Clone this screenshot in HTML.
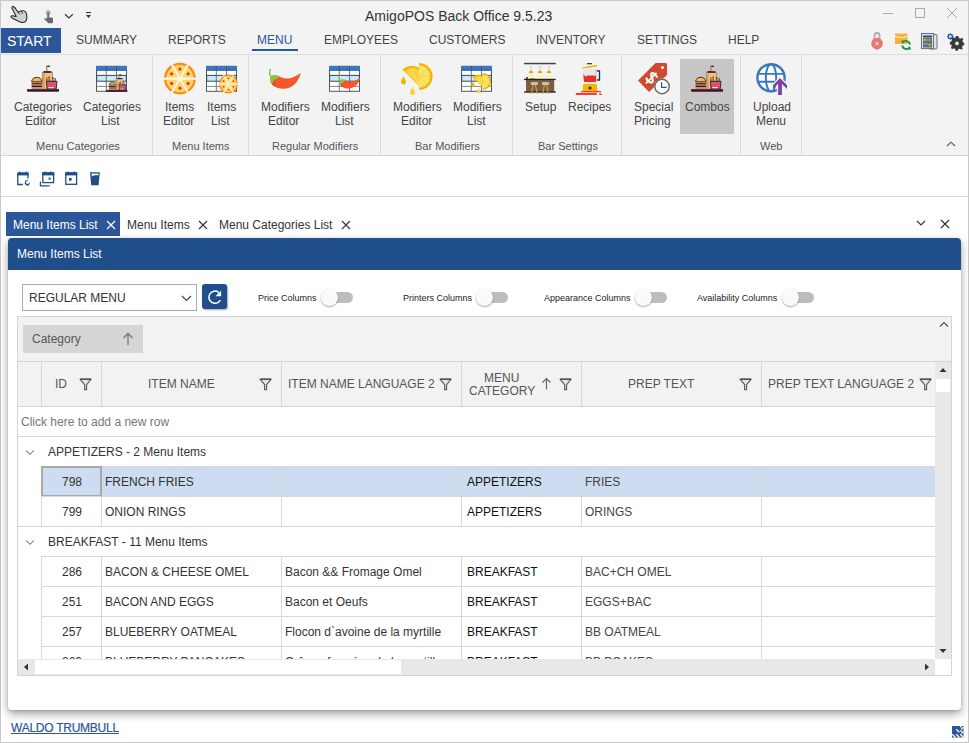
<!DOCTYPE html>
<html><head><meta charset="utf-8">
<style>
*{box-sizing:border-box;margin:0;padding:0}
html,body{width:969px;height:743px;overflow:hidden;background:#fff;font-family:"Liberation Sans",sans-serif;color:#333}
.a{position:absolute}
.t{position:absolute;white-space:nowrap;line-height:1}
#win{position:absolute;left:0;top:0;width:969px;height:743px;border:1px solid #c9c9c9;border-width:1px 1px 1px 1px;background:#fff;overflow:hidden}
</style></head><body>
<div id="win"></div>
<!-- title bar + tabs + ribbon background -->
<div class="a" style="left:1px;top:1px;width:967px;height:154px;background:#f3f3f3"></div>
<div class="a" style="left:1px;top:54px;width:967px;height:1px;background:#dcdcdc"></div>
<div class="a" style="left:1px;top:155px;width:967px;height:1px;background:#d6d6d6"></div>
<div class="t" style="left:365px;top:9px;font-size:14px;color:#333">AmigoPOS Back Office 9.5.23</div>

<!-- window controls -->
<div class="a" style="left:883px;top:13px;width:10px;height:1px;background:#a8a8a8"></div>
<div class="a" style="left:915px;top:8px;width:10px;height:10px;border:1px solid #a8a8a8"></div>
<svg class="a" style="left:946px;top:7px" width="12" height="12"><path d="M1 1L11 11M11 1L1 11" stroke="#a8a8a8" stroke-width="1"/></svg>

<!-- ribbon tabs -->
<div class="a" style="left:1px;top:28px;width:60px;height:25px;background:#2b579a"></div>
<div class="t" style="left:7px;top:34px;font-size:14px;color:#fff">START</div>
<div class="t" style="left:76px;top:34px;font-size:12px;color:#444">SUMMARY</div>
<div class="t" style="left:168px;top:34px;font-size:12px;color:#444">REPORTS</div>
<div class="t" style="left:257px;top:34px;font-size:12px;color:#2b579a">MENU</div>
<div class="a" style="left:252px;top:49px;width:46px;height:2px;background:#2b579a"></div>
<div class="t" style="left:324px;top:34px;font-size:12px;color:#444">EMPLOYEES</div>
<div class="t" style="left:429px;top:34px;font-size:12px;color:#444">CUSTOMERS</div>
<div class="t" style="left:536px;top:34px;font-size:12px;color:#444">INVENTORY</div>
<div class="t" style="left:637px;top:34px;font-size:12px;color:#444">SETTINGS</div>
<div class="t" style="left:728px;top:34px;font-size:12px;color:#444">HELP</div>

<!-- ribbon groups separators -->
<div class="a" style="left:152px;top:55px;width:1px;height:100px;background:#dadada"></div>
<div class="a" style="left:248px;top:55px;width:1px;height:100px;background:#dadada"></div>
<div class="a" style="left:380px;top:55px;width:1px;height:100px;background:#dadada"></div>
<div class="a" style="left:512px;top:55px;width:1px;height:100px;background:#dadada"></div>
<div class="a" style="left:621px;top:55px;width:1px;height:100px;background:#dadada"></div>
<div class="a" style="left:740px;top:55px;width:1px;height:100px;background:#dadada"></div>
<div class="a" style="left:801px;top:55px;width:1px;height:100px;background:#dadada"></div>

<!-- combos highlight -->
<div class="a" style="left:680px;top:59px;width:54px;height:75px;background:#c9c7c5"></div>

<svg class="a" style="left:24px;top:60px" width="40" height="36" viewBox="0 0 40 36"><g transform="translate(0,0) scale(1.0)"><path d="M22.5 6.3H26" stroke="#231f20" stroke-width="1.2"/><path d="M22.8 6V11.5" stroke="#888" stroke-width="1.2"/><path d="M18.3 12.2H28.4L27.8 29H18.9Z" fill="#f8c27a" stroke="#8a8a8a" stroke-width="0.9"/><rect x="19.5" y="11" width="7.8" height="2" fill="#5a2a40"/><rect x="19.3" y="13.3" width="1.4" height="15.5" fill="#d99a4a"/><path d="M23 17.5V22M25 16.5V22M29 17V22M31 18V22" stroke="#231f20" stroke-width="1.1"/><path d="M24 17.5V22M30 17.5V22" stroke="#f5c350" stroke-width="1"/><path d="M22.3 21.3H33L32.2 29H23.2Z" fill="#d9526f" stroke="#231f20" stroke-width="0.9"/><rect x="24.3" y="27.2" width="5.5" height="1" fill="#fff"/><path d="M7.6 21.5A5.3 5.2 0 0 1 18 21.5Z" fill="#f8b54c" stroke="#231f20" stroke-width="0.9"/><rect x="7.6" y="21.5" width="10.4" height="1.8" fill="#b6854a"/><rect x="7.6" y="23.2" width="10.4" height="1.3" fill="#231f20"/><rect x="7.6" y="24.5" width="10.4" height="1.5" fill="#c0557a"/><rect x="7.6" y="26" width="10.4" height="1.1" fill="#231f20"/><rect x="7.6" y="27.1" width="10.4" height="2" fill="#c89a48"/><rect x="3.2" y="29" width="31.7" height="2.7" fill="#2a1620"/><rect x="3.2" y="29" width="31.7" height="1" fill="#6a2a48"/></g></svg>
<svg class="a" style="left:92px;top:60px" width="40" height="36" viewBox="0 0 40 36"><rect x="4.5" y="6.3" width="30" height="25" fill="#fff" stroke="#555" stroke-width="1"/><rect x="4" y="6" width="31" height="4.6" fill="#3b78bf"/><path d="M4 10.3H35" stroke="#2a5a90" stroke-width="0.8"/><rect x="4.7" y="15.4" width="29.6" height="5.8" fill="#cfe9fb" stroke="#2d4b5e" stroke-width="1"/><path d="M14.3 6V31.5M24.5 6V31.5" stroke="#666" stroke-width="0.9"/><path d="M14.3 6V10.3M24.5 6V10.3" stroke="#2a5a90" stroke-width="0.9"/><path d="M4.5 26.4H34.5" stroke="#777" stroke-width="0.9"/><g transform="translate(11.9,10.5) scale(0.67)"><path d="M22.5 6.3H26" stroke="#231f20" stroke-width="1.2"/><path d="M22.8 6V11.5" stroke="#888" stroke-width="1.2"/><path d="M18.3 12.2H28.4L27.8 29H18.9Z" fill="#f8c27a" stroke="#8a8a8a" stroke-width="0.9"/><rect x="19.5" y="11" width="7.8" height="2" fill="#5a2a40"/><rect x="19.3" y="13.3" width="1.4" height="15.5" fill="#d99a4a"/><path d="M23 17.5V22M25 16.5V22M29 17V22M31 18V22" stroke="#231f20" stroke-width="1.1"/><path d="M24 17.5V22M30 17.5V22" stroke="#f5c350" stroke-width="1"/><path d="M22.3 21.3H33L32.2 29H23.2Z" fill="#d9526f" stroke="#231f20" stroke-width="0.9"/><rect x="24.3" y="27.2" width="5.5" height="1" fill="#fff"/><path d="M7.6 21.5A5.3 5.2 0 0 1 18 21.5Z" fill="#f8b54c" stroke="#231f20" stroke-width="0.9"/><rect x="7.6" y="21.5" width="10.4" height="1.8" fill="#b6854a"/><rect x="7.6" y="23.2" width="10.4" height="1.3" fill="#231f20"/><rect x="7.6" y="24.5" width="10.4" height="1.5" fill="#c0557a"/><rect x="7.6" y="26" width="10.4" height="1.1" fill="#231f20"/><rect x="7.6" y="27.1" width="10.4" height="2" fill="#c89a48"/><rect x="3.2" y="29" width="31.7" height="2.7" fill="#2a1620"/><rect x="3.2" y="29" width="31.7" height="1" fill="#6a2a48"/></g></svg>
<svg class="a" style="left:160px;top:60px" width="40" height="38" viewBox="0 0 40 38"><circle cx="19.9" cy="18.6" r="15.9" fill="#ff8a1c"/><circle cx="19.9" cy="18.6" r="13.674" fill="#ffd95c"/><path d="M3.00 18.60L36.80 18.60" stroke="#f4f4f4" stroke-width="2.07"/><path d="M11.45 3.96L28.35 33.24" stroke="#f4f4f4" stroke-width="2.07"/><path d="M28.35 3.96L11.45 33.24" stroke="#f4f4f4" stroke-width="2.07"/><circle cx="28.16" cy="23.37" r="1.59" fill="#e8303a"/><circle cx="19.90" cy="28.14" r="1.59" fill="#e8303a"/><circle cx="11.64" cy="23.37" r="1.59" fill="#e8303a"/><circle cx="11.64" cy="13.83" r="1.59" fill="#e8303a"/><circle cx="19.90" cy="9.06" r="1.59" fill="#e8303a"/><circle cx="28.16" cy="13.83" r="1.59" fill="#e8303a"/></svg>
<svg class="a" style="left:202px;top:60px" width="40" height="38" viewBox="0 0 40 38"><rect x="4.5" y="6.3" width="30" height="25" fill="#fff" stroke="#555" stroke-width="1"/><rect x="4" y="6" width="31" height="4.6" fill="#3b78bf"/><path d="M4 10.3H35" stroke="#2a5a90" stroke-width="0.8"/><rect x="4.7" y="15.4" width="29.6" height="5.8" fill="#cfe9fb" stroke="#2d4b5e" stroke-width="1"/><path d="M14.3 6V31.5M24.5 6V31.5" stroke="#666" stroke-width="0.9"/><path d="M14.3 6V10.3M24.5 6V10.3" stroke="#2a5a90" stroke-width="0.9"/><path d="M4.5 26.4H34.5" stroke="#777" stroke-width="0.9"/><circle cx="26.5" cy="24" r="9.4" fill="#ff8a1c"/><circle cx="26.5" cy="24" r="8.084" fill="#ffd95c"/><path d="M16.10 24.00L36.90 24.00" stroke="#f4f4f4" stroke-width="1.22"/><path d="M21.30 14.99L31.70 33.01" stroke="#f4f4f4" stroke-width="1.22"/><path d="M31.70 14.99L21.30 33.01" stroke="#f4f4f4" stroke-width="1.22"/><circle cx="31.38" cy="26.82" r="0.94" fill="#e8303a"/><circle cx="26.50" cy="29.64" r="0.94" fill="#e8303a"/><circle cx="21.62" cy="26.82" r="0.94" fill="#e8303a"/><circle cx="21.62" cy="21.18" r="0.94" fill="#e8303a"/><circle cx="26.50" cy="18.36" r="0.94" fill="#e8303a"/><circle cx="31.38" cy="21.18" r="0.94" fill="#e8303a"/></svg>
<svg class="a" style="left:265px;top:60px" width="40" height="36" viewBox="0 0 40 36"><g transform="translate(0,0) scale(1)"><path d="M5.5 9.5C4.5 11 4.3 13.5 5.8 16.5" stroke="#8bc34a" stroke-width="1.5" fill="none" stroke-linecap="round"/><path d="M7 24.5C10 27.5 14 28.8 18.5 28.8C26.5 28.8 33 23 35.8 13C31 16.5 26 18.8 21 18.6C18 18.4 16 17 14.5 16.5C10.5 18.5 8 21 7 24.5Z" fill="#f6562a"/><path d="M5 18C5 15.5 8 15 10.5 15C13 15 14.5 16.3 14.5 16.8C11 18 8.5 21 6.7 24.5C5.3 23 5 20.5 5 18Z" fill="#8bc34a"/><path d="M10 19.5C8 21.5 7 23 7 24.5C8.5 25.5 9.5 26 10.5 26.3C10.5 24 10.5 21.5 10 19.5Z" fill="#e04a24"/></g></svg>
<svg class="a" style="left:325px;top:60px" width="40" height="36" viewBox="0 0 40 36"><rect x="4.5" y="6.3" width="30" height="25" fill="#fff" stroke="#555" stroke-width="1"/><rect x="4" y="6" width="31" height="4.6" fill="#3b78bf"/><path d="M4 10.3H35" stroke="#2a5a90" stroke-width="0.8"/><rect x="4.7" y="15.4" width="29.6" height="5.8" fill="#cfe9fb" stroke="#2d4b5e" stroke-width="1"/><path d="M14.3 6V31.5M24.5 6V31.5" stroke="#666" stroke-width="0.9"/><path d="M14.3 6V10.3M24.5 6V10.3" stroke="#2a5a90" stroke-width="0.9"/><path d="M4.5 26.4H34.5" stroke="#777" stroke-width="0.9"/><g transform="translate(11,9) scale(0.68)"><path d="M5.5 9.5C4.5 11 4.3 13.5 5.8 16.5" stroke="#8bc34a" stroke-width="1.5" fill="none" stroke-linecap="round"/><path d="M7 24.5C10 27.5 14 28.8 18.5 28.8C26.5 28.8 33 23 35.8 13C31 16.5 26 18.8 21 18.6C18 18.4 16 17 14.5 16.5C10.5 18.5 8 21 7 24.5Z" fill="#f6562a"/><path d="M5 18C5 15.5 8 15 10.5 15C13 15 14.5 16.3 14.5 16.8C11 18 8.5 21 6.7 24.5C5.3 23 5 20.5 5 18Z" fill="#8bc34a"/><path d="M10 19.5C8 21.5 7 23 7 24.5C8.5 25.5 9.5 26 10.5 26.3C10.5 24 10.5 21.5 10 19.5Z" fill="#e04a24"/></g></svg>
<svg class="a" style="left:397px;top:58px" width="40" height="40" viewBox="0 0 40 40"><g transform="translate(0,0) scale(1)"><path d="M22.1 28L5.5 11.5A15.5 15.5 0 0 1 22.1 9.5Z" fill="#f2b705"/><path d="M22.1 27L8 13A13 13 0 0 1 22.1 11.5Z" fill="#f8d23a"/><path d="M22.1 27L14.5 10.5M22.1 27L22.1 11.5M22.1 27L11 12" stroke="#fbe27a" stroke-width="0.8"/><path d="M22.1 5A13.5 13.5 0 0 1 22.1 32Z" fill="#f2b705"/><path d="M22.1 7.6A10.9 10.9 0 0 1 22.1 29.4Z" fill="#f9e46a"/><path d="M22.1 18.5L30 10.5M22.1 18.5H33M22.1 18.5L30 26.5" stroke="#f5d040" stroke-width="0.8"/><path d="M6.5 18.3C5.2 21 4 22.5 4 24C4 25.5 5.1 26.4 6.5 26.4C7.9 26.4 9 25.5 9 24C9 22.5 7.8 21 6.5 18.3Z" fill="#f2b705"/><path d="M15.5 29C14.2 31.7 13 33.2 13 34.7C13 36.2 14.1 37.1 15.5 37.1C16.9 37.1 18 36.2 18 34.7C18 33.2 16.8 31.7 15.5 29Z" fill="#f8d23a"/></g></svg>
<svg class="a" style="left:457px;top:60px" width="40" height="38" viewBox="0 0 40 38"><rect x="4.5" y="6.3" width="30" height="25" fill="#fff" stroke="#555" stroke-width="1"/><rect x="4" y="6" width="31" height="4.6" fill="#3b78bf"/><path d="M4 10.3H35" stroke="#2a5a90" stroke-width="0.8"/><rect x="4.7" y="15.4" width="29.6" height="5.8" fill="#cfe9fb" stroke="#2d4b5e" stroke-width="1"/><path d="M14.3 6V31.5M24.5 6V31.5" stroke="#666" stroke-width="0.9"/><path d="M14.3 6V10.3M24.5 6V10.3" stroke="#2a5a90" stroke-width="0.9"/><path d="M4.5 26.4H34.5" stroke="#777" stroke-width="0.9"/><g transform="translate(12,10) scale(0.62)"><path d="M22.1 28L5.5 11.5A15.5 15.5 0 0 1 22.1 9.5Z" fill="#f2b705"/><path d="M22.1 27L8 13A13 13 0 0 1 22.1 11.5Z" fill="#f8d23a"/><path d="M22.1 27L14.5 10.5M22.1 27L22.1 11.5M22.1 27L11 12" stroke="#fbe27a" stroke-width="0.8"/><path d="M22.1 5A13.5 13.5 0 0 1 22.1 32Z" fill="#f2b705"/><path d="M22.1 7.6A10.9 10.9 0 0 1 22.1 29.4Z" fill="#f9e46a"/><path d="M22.1 18.5L30 10.5M22.1 18.5H33M22.1 18.5L30 26.5" stroke="#f5d040" stroke-width="0.8"/><path d="M6.5 18.3C5.2 21 4 22.5 4 24C4 25.5 5.1 26.4 6.5 26.4C7.9 26.4 9 25.5 9 24C9 22.5 7.8 21 6.5 18.3Z" fill="#f2b705"/><path d="M15.5 29C14.2 31.7 13 33.2 13 34.7C13 36.2 14.1 37.1 15.5 37.1C16.9 37.1 18 36.2 18 34.7C18 33.2 16.8 31.7 15.5 29Z" fill="#f8d23a"/></g></svg>
<svg class="a" style="left:520px;top:58px" width="40" height="40" viewBox="0 0 40 40"><rect x="4" y="4.8" width="31.8" height="1.5" fill="#4a4038"/><rect x="10.3" y="6.2" width="1.4" height="6" fill="#d8d8d8"/><path d="M8.8 15A2.2 2.6 0 0 1 13.2 15Z" fill="#e0a020"/><path d="M9.2 15H12.8L14.2 20.8H7.8Z" fill="#fbf3c4"/><rect x="19.2" y="6.2" width="1.4" height="6" fill="#d8d8d8"/><path d="M17.7 15A2.2 2.6 0 0 1 22.099999999999998 15Z" fill="#e0a020"/><path d="M18.099999999999998 15H21.7L23.099999999999998 20.8H16.7Z" fill="#fbf3c4"/><rect x="28.3" y="6.2" width="1.4" height="6" fill="#d8d8d8"/><path d="M26.8 15A2.2 2.6 0 0 1 31.2 15Z" fill="#e0a020"/><path d="M27.2 15H30.8L32.2 20.8H25.8Z" fill="#fbf3c4"/><rect x="6" y="19" width="2" height="2.3" fill="#c0302a"/><rect x="10" y="20" width="5" height="1.6" fill="#d8a040"/><rect x="6" y="22" width="28.2" height="12" fill="#7a5f45"/><rect x="4" y="20.8" width="31.8" height="1.3" fill="#222"/><rect x="4" y="33.4" width="31.8" height="1.3" fill="#222"/><path d="M13.3 26.5L11.3 36M15.3 26.5L17.3 36" stroke="#e0a030" stroke-width="1.1"/><rect x="10.8" y="24" width="7.2" height="3" rx="1" fill="#cbc1aa"/><path d="M24.5 26.5L22.5 36M26.5 26.5L28.5 36" stroke="#e0a030" stroke-width="1.1"/><rect x="22" y="24" width="7.2" height="3" rx="1" fill="#cbc1aa"/></svg>
<svg class="a" style="left:570px;top:58px" width="40" height="40" viewBox="0 0 40 40"><rect x="17" y="5" width="5" height="1.3" fill="#2e4a62"/><path d="M12.5 9.2L27 6.8V8.6L12.5 10.6Z" fill="#f0b400"/><path d="M26.5 13H29.5V22H26.5" stroke="#1e3345" stroke-width="1.3" fill="none"/><rect x="13" y="11" width="13.5" height="13" fill="#e8e8e8"/><rect x="25.3" y="11" width="1.3" height="13" fill="#c8c8c8"/><path d="M13.3 16C15 17.5 16 20 16.5 18C18 17.5 22 17.3 26 18V24H14Z" fill="#e8302a"/><path d="M13.3 26H26.7L27.5 33H12.5Z" fill="#f5b800"/><circle cx="20" cy="30" r="1.6" fill="#1e3345"/><rect x="11" y="33" width="20" height="1.3" fill="#ff3a2a"/><rect x="5.8" y="35" width="21" height="2" fill="#ff3a2a"/><rect x="29" y="35.5" width="3" height="1.5" rx="0.7" fill="#ff3a2a"/></svg>
<svg class="a" style="left:634px;top:58px" width="40" height="40" viewBox="0 0 40 40"><path d="M4 22.5L21.5 5H32L33 6V17L15 34Z" fill="#d04a2e"/><circle cx="28.5" cy="9.5" r="1.5" fill="#fff"/><g transform="rotate(45 17.8 20)"><path d="M21.3 16.3C20.3 14.6 14.8 14.6 14.4 17C14 19.6 21.3 19.4 21 22.6C20.7 25.3 14.8 25.3 13.8 23.3" stroke="#fff" fill="none" stroke-width="2.1"/><path d="M17.5 13V28" stroke="#fff" stroke-width="1.7"/></g><circle cx="28" cy="28.5" r="7.6" fill="#fff" stroke="#f3f3f3" stroke-width="1"/><circle cx="28" cy="28.5" r="7.2" fill="#fff" stroke="#666" stroke-width="1.4"/><path d="M27.6 24.2V29.3H32.6" stroke="#1a5bb0" stroke-width="1.2" fill="none"/></svg>
<svg class="a" style="left:688px;top:60px" width="40" height="36" viewBox="0 0 40 36"><g transform="translate(0,0) scale(1.0)"><path d="M22.5 6.3H26" stroke="#231f20" stroke-width="1.2"/><path d="M22.8 6V11.5" stroke="#888" stroke-width="1.2"/><path d="M18.3 12.2H28.4L27.8 29H18.9Z" fill="#f8c27a" stroke="#8a8a8a" stroke-width="0.9"/><rect x="19.5" y="11" width="7.8" height="2" fill="#5a2a40"/><rect x="19.3" y="13.3" width="1.4" height="15.5" fill="#d99a4a"/><path d="M23 17.5V22M25 16.5V22M29 17V22M31 18V22" stroke="#231f20" stroke-width="1.1"/><path d="M24 17.5V22M30 17.5V22" stroke="#f5c350" stroke-width="1"/><path d="M22.3 21.3H33L32.2 29H23.2Z" fill="#d9526f" stroke="#231f20" stroke-width="0.9"/><rect x="24.3" y="27.2" width="5.5" height="1" fill="#fff"/><path d="M7.6 21.5A5.3 5.2 0 0 1 18 21.5Z" fill="#f8b54c" stroke="#231f20" stroke-width="0.9"/><rect x="7.6" y="21.5" width="10.4" height="1.8" fill="#b6854a"/><rect x="7.6" y="23.2" width="10.4" height="1.3" fill="#231f20"/><rect x="7.6" y="24.5" width="10.4" height="1.5" fill="#c0557a"/><rect x="7.6" y="26" width="10.4" height="1.1" fill="#231f20"/><rect x="7.6" y="27.1" width="10.4" height="2" fill="#c89a48"/><rect x="3.2" y="29" width="31.7" height="2.7" fill="#2a1620"/><rect x="3.2" y="29" width="31.7" height="1" fill="#6a2a48"/></g></svg>
<svg class="a" style="left:752px;top:58px" width="40" height="40" viewBox="0 0 40 40"><circle cx="19" cy="19.8" r="13.6" fill="#fff" stroke="#3a77bf" stroke-width="2.4"/><ellipse cx="19" cy="19.8" rx="5.2" ry="13.6" fill="none" stroke="#3a77bf" stroke-width="2"/><path d="M6 15.9H32M6 23.7H32" stroke="#3a77bf" stroke-width="1.9"/><path d="M28 18.3L36.8 27.3V32.5L31.2 26.8V38.5H24.8V26.8L19.2 32.5V27.3Z" fill="#f3f3f3"/><path d="M28 20L35 27.3V31L29.9 25.8V37H26.1V25.8L21 31V27.3Z" fill="#8040a8"/></svg>
<svg class="a" style="left:5px;top:3px" width="30" height="24" viewBox="0 0 30 24"><path d="M7.2 5.8C6.2 4.3 7.3 3.2 8.6 3.6C9.6 3.9 10.4 5.2 11.6 7.1L13.2 9.2C14.6 8.4 16.2 7.6 18 7.8C20 8 21.3 9.4 21.6 11.5C22 14 21.8 16.5 21.3 17.5C20.6 19 18.6 19.8 16.5 19.4C14.8 19.1 12 17.5 9.5 16.3C7.5 15.4 6 14.6 6 13.5C6 12.6 7.4 12.5 9 13L11.2 13.7C9.8 11 8.3 7.6 7.2 5.8Z" fill="#d0d0d0" stroke="#2a2a2a" stroke-width="1.1" stroke-linejoin="round"/><path d="M13.2 9.2L14.8 11.5M16.3 8.2L17.6 10.8" stroke="#2a2a2a" stroke-width="0.9"/></svg>
<svg class="a" style="left:38px;top:3px" width="60" height="24" viewBox="0 0 60 24"><circle cx="10.2" cy="9.6" r="2.6" fill="#9cc3e8"/><rect x="9.3" y="9.3" width="1.9" height="9" rx="0.9" fill="#6a6a6a"/><path d="M8.8 14.5H13.6C14.6 14.5 15 15.3 15 16.2V19.8L14 20.2H10.5L6.3 16.2L6.7 15.2L9 15.6Z" fill="#6a6a6a"/><path d="M27 11.2L30.9 15L34.8 11.2" stroke="#333" stroke-width="1.2" fill="none"/><rect x="48" y="9" width="5" height="1.1" fill="#333"/><path d="M48 11.9H53L50.5 14.9Z" fill="#333"/></svg>
<svg class="a" style="left:10px;top:165px" width="100" height="30" viewBox="0 0 100 30"><path d="M7.8 8.2H18V13.5M7.8 8.2V19.5H13" stroke="#1f4e8a" stroke-width="1.3" fill="none"/><rect x="7.2" y="7.6" width="11.3" height="2.8" fill="#1f4e8a"/><path d="M9.8 6.5V8.5M16.2 6.5V8.5" stroke="#1f4e8a" stroke-width="1.3"/><path d="M19.4 17.8A2.1 2.1 0 1 1 17.8 15.6M16.2 18.4A2.1 2.1 0 0 0 18.6 20.3" stroke="#1f4e8a" stroke-width="1.1" fill="none"/><path d="M30.4 16.4V20.8H39.6" stroke="#1f4e8a" stroke-width="1.2" fill="none"/><rect x="32.8" y="8" width="10.8" height="9.6" fill="none" stroke="#1f4e8a" stroke-width="1.3"/><rect x="32.2" y="7.4" width="12" height="3" fill="#1f4e8a"/><path d="M35 6.5V8.5M41 6.5V8.5" stroke="#1f4e8a" stroke-width="1.3"/><rect x="38.6" y="12.6" width="2" height="2" fill="#1f4e8a"/><rect x="55.8" y="8" width="10.8" height="11.3" fill="none" stroke="#1f4e8a" stroke-width="1.3"/><rect x="55.2" y="7.4" width="12" height="3" fill="#1f4e8a"/><path d="M58 6.5V8.5M64 6.5V8.5" stroke="#1f4e8a" stroke-width="1.3"/><rect x="59" y="13" width="2.6" height="2.6" fill="#1f4e8a"/><path d="M80 7.2H89.8L88.6 20.3H81.2Z" fill="#1f4e8a"/><path d="M81.3 8.5H88.5L88.3 10.5C86 10 83.5 10.5 82 11.5Z" fill="#e6eef8"/></svg>
<svg class="a" style="left:868px;top:30px" width="100" height="22" viewBox="0 0 100 22"><path d="M6.5 10V5.5A2.5 2.5 0 0 1 11.5 5.5V10" stroke="#b0b0b0" stroke-width="1.8" fill="none"/><circle cx="9" cy="13.5" r="5.8" fill="#e9776c"/><rect x="7.5" y="18" width="3" height="1.5" fill="#e9776c"/><path d="M7.4 11.9L10.6 15.1M10.6 11.9L7.4 15.1" stroke="#fff" stroke-width="0.9"/><path d="M27 3.5H39.5V14H27Z" fill="#fbb03b"/><path d="M27 6C31 8 35 8 39.5 6" stroke="#fff" stroke-width="0.9" fill="none"/><path d="M42 14.5A4.3 4.3 0 0 0 34.5 12.5" stroke="#21974a" stroke-width="2" fill="none"/><path d="M34.2 15.5A4.3 4.3 0 0 0 41.7 17.5" stroke="#21974a" stroke-width="2" fill="none"/><path d="M33 10.5L36.2 10.8L34.4 14Z" fill="#21974a"/><path d="M43.3 19.5L40 19.2L41.8 16Z" fill="#21974a"/><rect x="61" y="4.5" width="8" height="14.5" rx="1" fill="#dfe6ec" stroke="#6a7580" stroke-width="1"/><rect x="53.5" y="3.5" width="12" height="15" fill="#dfe6ec" stroke="#6a7580" stroke-width="1.1"/><rect x="55" y="5.5" width="9" height="2" fill="#34495e"/><rect x="55" y="8" width="9" height="9.5" fill="#5d6d7e"/><rect x="55.5" y="8.8" width="2.3" height="2.3" fill="#f5a623"/><path d="M58.5 10H63" stroke="#c8d0d8" stroke-width="0.8"/><rect x="60.5" y="13.5" width="2.3" height="2.3" fill="#f5a623"/><path d="M55.5 14H59.5" stroke="#c8d0d8" stroke-width="0.8"/><g transform="translate(82.3,6.5)"><path d="M0 -3.6L1 -2.4L2.5 -2.6L2.4 -1L3.6 0L2.4 1L2.5 2.6L1 2.4L0 3.6L-1 2.4L-2.5 2.6L-2.4 1L-3.6 0L-2.4 -1L-2.5 -2.6L-1 -2.4Z" fill="#1565c0"/><circle r="1.3" fill="#f3f3f3"/></g><g transform="translate(89,13.4)"><path d="M-1.2 -6H1.2L1.6 -4.2L3.2 -3.4L4.8 -4.4L6.2 -3L5.2 -1.4L5.8 0.2L7 0.8V3L5.6 3.4L4.8 5L5.6 6.4L4 7.6L2.6 6.6L1 7.2L0.6 8.6H-1.6L-2 7L-3.6 6.2L-5 7.2L-6.4 5.6L-5.4 4.2L-6 2.6L-7.4 2.2V0L-6 -0.6L-5.2 -2.2L-6 -3.8L-4.4 -5L-3 -4L-1.6 -4.6Z" fill="#3a3a3a" transform="translate(0.2,-1.3)"/><circle r="1.8" fill="#f3f3f3"/></g></svg>
<svg class="a" style="left:952px;top:726px" width="12" height="12" viewBox="0 0 12 12"><rect x="0" y="0" width="11.5" height="11.5" fill="#2b579a"/><rect x="8" y="0" width="1.5" height="1.5" fill="#f4efe4"/><rect x="10" y="1" width="1.5" height="1.5" fill="#f4efe4"/><rect x="9" y="2" width="1.5" height="1.5" fill="#f4efe4"/><rect x="4" y="3" width="1.5" height="1.5" fill="#f4efe4"/><rect x="5" y="4" width="1.5" height="1.5" fill="#f4efe4"/><rect x="6" y="5" width="1.5" height="1.5" fill="#f4efe4"/><rect x="8" y="4" width="1.5" height="1.5" fill="#f4efe4"/><rect x="10" y="5" width="1.5" height="1.5" fill="#f4efe4"/><rect x="9" y="6" width="1.5" height="1.5" fill="#f4efe4"/><rect x="0" y="8" width="1.5" height="1.5" fill="#f4efe4"/><rect x="1" y="9" width="1.5" height="1.5" fill="#f4efe4"/><rect x="2" y="10" width="1.5" height="1.5" fill="#f4efe4"/><rect x="4" y="8" width="1.5" height="1.5" fill="#f4efe4"/><rect x="5" y="9" width="1.5" height="1.5" fill="#f4efe4"/><rect x="6" y="10" width="1.5" height="1.5" fill="#f4efe4"/><rect x="8" y="8" width="1.5" height="1.5" fill="#f4efe4"/><rect x="9" y="9" width="1.5" height="1.5" fill="#f4efe4"/><rect x="10" y="10" width="1.5" height="1.5" fill="#f4efe4"/></svg>
<!-- ribbon labels -->
<div class="t" style="left:14px;top:101px;font-size:12px;color:#444">Categories</div>
<div class="t" style="left:25px;top:115px;font-size:12px;color:#444">Editor</div>
<div class="t" style="left:83px;top:101px;font-size:12px;color:#444">Categories</div>
<div class="t" style="left:101px;top:115px;font-size:12px;color:#444">List</div>
<div class="t" style="left:165px;top:101px;font-size:12px;color:#444">Items</div>
<div class="t" style="left:163px;top:115px;font-size:12px;color:#444">Editor</div>
<div class="t" style="left:207px;top:101px;font-size:12px;color:#444">Items</div>
<div class="t" style="left:211px;top:115px;font-size:12px;color:#444">List</div>
<div class="t" style="left:261px;top:101px;font-size:12px;color:#444">Modifiers</div>
<div class="t" style="left:268px;top:115px;font-size:12px;color:#444">Editor</div>
<div class="t" style="left:321px;top:101px;font-size:12px;color:#444">Modifiers</div>
<div class="t" style="left:335px;top:115px;font-size:12px;color:#444">List</div>
<div class="t" style="left:393px;top:101px;font-size:12px;color:#444">Modifiers</div>
<div class="t" style="left:401px;top:115px;font-size:12px;color:#444">Editor</div>
<div class="t" style="left:453px;top:101px;font-size:12px;color:#444">Modifiers</div>
<div class="t" style="left:467px;top:115px;font-size:12px;color:#444">List</div>
<div class="t" style="left:525px;top:101px;font-size:12px;color:#444">Setup</div>
<div class="t" style="left:568px;top:101px;font-size:12px;color:#444">Recipes</div>
<div class="t" style="left:634px;top:101px;font-size:12px;color:#444">Special</div>
<div class="t" style="left:634px;top:115px;font-size:12px;color:#444">Pricing</div>
<div class="t" style="left:685px;top:101px;font-size:12px;color:#444">Combos</div>
<div class="t" style="left:753px;top:101px;font-size:12px;color:#444">Upload</div>
<div class="t" style="left:756px;top:115px;font-size:12px;color:#444">Menu</div>

<div class="t" style="left:36px;top:141px;font-size:11px;color:#555">Menu Categories</div>
<div class="t" style="left:172px;top:141px;font-size:11px;color:#555">Menu Items</div>
<div class="t" style="left:272px;top:141px;font-size:11px;color:#555">Regular Modifiers</div>
<div class="t" style="left:415px;top:141px;font-size:11px;color:#555">Bar Modifiers</div>
<div class="t" style="left:538px;top:141px;font-size:11px;color:#555">Bar Settings</div>
<div class="t" style="left:760px;top:141px;font-size:11px;color:#555">Web</div>
<svg class="a" style="left:946px;top:141px" width="10" height="7"><path d="M1 5L5 1.2L9 5" stroke="#5a5a5a" fill="none" stroke-width="1.05"/></svg>

<!-- toolbar line -->
<div class="a" style="left:1px;top:196px;width:967px;height:1px;background:#d8d8d8"></div>

<!-- doc tabs -->
<div class="a" style="left:6px;top:212px;width:114px;height:24px;background:#2b579a"></div>
<div class="t" style="left:13px;top:219px;font-size:12px;color:#fff">Menu Items List</div>
<svg class="a" style="left:106px;top:220px" width="10" height="10"><path d="M1 1L9 9M9 1L1 9" stroke="#fff" stroke-width="1.2"/></svg>
<div class="t" style="left:127px;top:219px;font-size:12px;color:#333">Menu Items</div>
<svg class="a" style="left:198px;top:220px" width="10" height="10"><path d="M1 1L9 9M9 1L1 9" stroke="#333" stroke-width="1.1"/></svg>
<div class="t" style="left:219px;top:219px;font-size:12px;color:#333">Menu Categories List</div>
<svg class="a" style="left:341px;top:220px" width="10" height="10"><path d="M1 1L9 9M9 1L1 9" stroke="#333" stroke-width="1.1"/></svg>
<svg class="a" style="left:916px;top:220px" width="10" height="7"><path d="M1 1L5 5L9 1" stroke="#333" fill="none" stroke-width="1.2"/></svg>
<svg class="a" style="left:940px;top:219px" width="10" height="10"><path d="M1 1L9 9M9 1L1 9" stroke="#333" stroke-width="1.2"/></svg>

<!-- panel -->
<div class="a" style="left:8px;top:238px;width:953px;height:472px;background:#fff;border-radius:4px;box-shadow:0 4px 10px rgba(0,0,0,0.36),0 1px 3px rgba(0,0,0,0.12)"></div>
<div class="a" style="left:8px;top:238px;width:953px;height:32px;background:#1f4e8a;border-radius:4px 4px 0 0"></div>
<div class="t" style="left:17px;top:248px;font-size:12px;color:#fff">Menu Items List</div>


<!-- combo + toggles -->
<div class="a" style="left:22px;top:284px;width:175px;height:27px;border:1px solid #a9a9a9;background:#fff"></div>
<div class="t" style="left:29px;top:292px;font-size:12px;color:#333">REGULAR MENU</div>
<svg class="a" style="left:181px;top:295px" width="11" height="7"><path d="M1 1L5.5 5.5L10 1" stroke="#444" fill="none" stroke-width="1.2"/></svg>
<div class="a" style="left:202px;top:284px;width:25px;height:25px;background:#1f4e8a;border-radius:3px;box-shadow:1px 1px 2px rgba(0,0,0,0.35)"></div>
<svg class="a" style="left:202px;top:284px" width="25" height="25"><path d="M16.6 8.3A6.1 6.1 0 1 0 18.3 16.2" stroke="#fff" fill="none" stroke-width="1.5"/><path d="M19.1 6.6V12.3H13.4Z" fill="#fff"/></svg>
<div class="t" style="left:258px;top:294px;font-size:9px;color:#222">Price Columns</div>
<div class="a" style="left:322px;top:292px;width:31px;height:11px;border-radius:6px;background:#bdbdbd"></div>
<div class="a" style="left:321px;top:289px;width:17px;height:17px;border-radius:50%;background:#fafafa;box-shadow:0 1px 2px rgba(0,0,0,0.35)"></div>
<div class="t" style="left:403px;top:294px;font-size:9px;color:#222">Printers Columns</div>
<div class="a" style="left:477px;top:292px;width:31px;height:11px;border-radius:6px;background:#bdbdbd"></div>
<div class="a" style="left:476px;top:289px;width:17px;height:17px;border-radius:50%;background:#fafafa;box-shadow:0 1px 2px rgba(0,0,0,0.35)"></div>
<div class="t" style="left:544px;top:294px;font-size:9px;color:#222">Appearance Columns</div>
<div class="a" style="left:636px;top:292px;width:31px;height:11px;border-radius:6px;background:#bdbdbd"></div>
<div class="a" style="left:635px;top:289px;width:17px;height:17px;border-radius:50%;background:#fafafa;box-shadow:0 1px 2px rgba(0,0,0,0.35)"></div>
<div class="t" style="left:697px;top:294px;font-size:9px;color:#222">Availability Columns</div>
<div class="a" style="left:783px;top:292px;width:31px;height:11px;border-radius:6px;background:#bdbdbd"></div>
<div class="a" style="left:782px;top:289px;width:17px;height:17px;border-radius:50%;background:#fafafa;box-shadow:0 1px 2px rgba(0,0,0,0.35)"></div>
<div class="a" style="left:17px;top:316px;width:935px;height:360px;border:1px solid #d4d4d4;background:#fff"></div>
<div class="a" style="left:18px;top:317px;width:933px;height:45px;background:#f2f2f2;border-bottom:1px solid #d4d4d4"></div>
<div class="a" style="left:23px;top:325px;width:120px;height:28px;background:#d5d5d5"></div>
<div class="t" style="left:32px;top:333px;font-size:12px;color:#555">Category</div>
<svg class="a" style="left:122px;top:332px" width="12" height="14"><path d="M6 13V1.5M1.5 6L6 1.5L10.5 6" stroke="#777" fill="none" stroke-width="1.3"/></svg>
<svg class="a" style="left:939px;top:321px" width="10" height="7"><path d="M1 5.5L5 1.5L9 5.5" stroke="#555" fill="none" stroke-width="1.2"/></svg>
<div class="a" style="left:18px;top:362px;width:917px;height:45px;background:#f2f2f2;border-bottom:1px solid #d4d4d4"></div>
<div class="a" style="left:41px;top:362px;width:1px;height:44px;background:#d8d8d8"></div>
<div class="a" style="left:101px;top:362px;width:1px;height:44px;background:#d8d8d8"></div>
<div class="a" style="left:281px;top:362px;width:1px;height:44px;background:#d8d8d8"></div>
<div class="a" style="left:461px;top:362px;width:1px;height:44px;background:#d8d8d8"></div>
<div class="a" style="left:581px;top:362px;width:1px;height:44px;background:#d8d8d8"></div>
<div class="a" style="left:761px;top:362px;width:1px;height:44px;background:#d8d8d8"></div>
<div class="t" style="left:55px;top:378px;font-size:12px;color:#555">ID</div>
<div class="t" style="left:148px;top:378px;font-size:12px;color:#555">ITEM NAME</div>
<div class="t" style="left:288px;top:378px;font-size:12px;color:#555">ITEM NAME LANGUAGE 2</div>
<div class="t" style="left:628px;top:378px;font-size:12px;color:#555">PREP TEXT</div>
<div class="t" style="left:768px;top:378px;font-size:12px;color:#555">PREP TEXT LANGUAGE 2</div>
<div class="t" style="left:484px;top:372px;font-size:12px;color:#555">MENU</div>
<div class="t" style="left:469px;top:385px;font-size:12px;color:#555">CATEGORY</div>
<svg class="a" style="left:541px;top:377px" width="11" height="13"><path d="M5.5 12.5V1.5M1.5 5.5L5.5 1.5L9.5 5.5" stroke="#666" fill="none" stroke-width="1.2"/></svg>
<svg class="a" style="left:79px;top:378px" width="13" height="13"><path d="M1 1.2H12.2L7.6 6.6V11.6H5.6V6.6Z" stroke="#5a5a5a" fill="#e6e6e6" stroke-width="1.15" stroke-linejoin="round"/><path d="M1 1.2H12.2" stroke="#555" stroke-width="1.6"/></svg>
<svg class="a" style="left:259px;top:378px" width="13" height="13"><path d="M1 1.2H12.2L7.6 6.6V11.6H5.6V6.6Z" stroke="#5a5a5a" fill="#e6e6e6" stroke-width="1.15" stroke-linejoin="round"/><path d="M1 1.2H12.2" stroke="#555" stroke-width="1.6"/></svg>
<svg class="a" style="left:439px;top:378px" width="13" height="13"><path d="M1 1.2H12.2L7.6 6.6V11.6H5.6V6.6Z" stroke="#5a5a5a" fill="#e6e6e6" stroke-width="1.15" stroke-linejoin="round"/><path d="M1 1.2H12.2" stroke="#555" stroke-width="1.6"/></svg>
<svg class="a" style="left:559px;top:378px" width="13" height="13"><path d="M1 1.2H12.2L7.6 6.6V11.6H5.6V6.6Z" stroke="#5a5a5a" fill="#e6e6e6" stroke-width="1.15" stroke-linejoin="round"/><path d="M1 1.2H12.2" stroke="#555" stroke-width="1.6"/></svg>
<svg class="a" style="left:739px;top:378px" width="13" height="13"><path d="M1 1.2H12.2L7.6 6.6V11.6H5.6V6.6Z" stroke="#5a5a5a" fill="#e6e6e6" stroke-width="1.15" stroke-linejoin="round"/><path d="M1 1.2H12.2" stroke="#555" stroke-width="1.6"/></svg>
<svg class="a" style="left:919px;top:378px" width="13" height="13"><path d="M1 1.2H12.2L7.6 6.6V11.6H5.6V6.6Z" stroke="#5a5a5a" fill="#e6e6e6" stroke-width="1.15" stroke-linejoin="round"/><path d="M1 1.2H12.2" stroke="#555" stroke-width="1.6"/></svg>
<div class="a" style="left:935px;top:362px;width:16px;height:297px;background:#e8e8e8"></div>
<svg class="a" style="left:939px;top:367px" width="8" height="6"><path d="M0.5 5L4 1L7.5 5Z" fill="#333"/></svg>
<div class="a" style="left:936px;top:379px;width:14px;height:13px;background:#fff"></div>
<svg class="a" style="left:939px;top:648px" width="8" height="6"><path d="M0.5 1L4 5L7.5 1Z" fill="#333"/></svg>
<div class="a" style="left:18px;top:659px;width:917px;height:16px;background:#e8e8e8"></div>
<div class="a" style="left:35px;top:660px;width:366px;height:14px;background:#fff"></div>
<svg class="a" style="left:23px;top:663px" width="6" height="8"><path d="M5 0.5L1 4L5 7.5Z" fill="#333"/></svg>
<svg class="a" style="left:924px;top:663px" width="6" height="8"><path d="M1 0.5L5 4L1 7.5Z" fill="#333"/></svg>
<div class="a" style="left:935px;top:659px;width:16px;height:16px;background:#fff"></div>
<div class="a" style="left:18px;top:406px;width:917px;height:253px;overflow:hidden">
<div class="t" style="left:3px;top:10px;font-size:12px;color:#777">Click here to add a new row</div>
<div class="a" style="left:0px;top:30px;width:917px;height:1px;background:#d8d8d8"></div>
<svg class="a" style="left:7px;top:43px" width="10" height="7"><path d="M1 1.5L5 5.3L9 1.5" stroke="#555" fill="none" stroke-width="1"/></svg>
<div class="t" style="left:30px;top:40px;font-size:12px;color:#333">APPETIZERS - 2 Menu Items</div>
<div class="a" style="left:23px;top:60px;width:894px;height:1px;background:#d8d8d8"></div>
<div class="a" style="left:23px;top:61px;width:894px;height:29px;background:#cddcf0"></div>
<div class="a" style="left:23px;top:60px;width:1px;height:30px;background:#d8d8d8"></div>
<div class="a" style="left:83px;top:60px;width:1px;height:30px;background:#d8d8d8"></div>
<div class="a" style="left:263px;top:60px;width:1px;height:30px;background:#d8d8d8"></div>
<div class="a" style="left:443px;top:60px;width:1px;height:30px;background:#d8d8d8"></div>
<div class="a" style="left:563px;top:60px;width:1px;height:30px;background:#d8d8d8"></div>
<div class="a" style="left:743px;top:60px;width:1px;height:30px;background:#d8d8d8"></div>
<div class="t" style="left:44px;top:70px;font-size:12px;color:#333">798</div>
<div class="t" style="left:87px;top:70px;font-size:12px;color:#333">FRENCH FRIES</div>
<div class="t" style="left:267px;top:70px;font-size:12px;color:#333"></div>
<div class="t" style="left:449px;top:70px;font-size:12px;color:#111">APPETIZERS</div>
<div class="t" style="left:567px;top:70px;font-size:12px;color:#444">FRIES</div>
<div class="a" style="left:23px;top:60px;width:61px;height:31px;border:2px solid #a8a8a8"></div>
<div class="a" style="left:23px;top:90px;width:894px;height:1px;background:#d8d8d8"></div>
<div class="a" style="left:23px;top:90px;width:1px;height:30px;background:#d8d8d8"></div>
<div class="a" style="left:83px;top:90px;width:1px;height:30px;background:#d8d8d8"></div>
<div class="a" style="left:263px;top:90px;width:1px;height:30px;background:#d8d8d8"></div>
<div class="a" style="left:443px;top:90px;width:1px;height:30px;background:#d8d8d8"></div>
<div class="a" style="left:563px;top:90px;width:1px;height:30px;background:#d8d8d8"></div>
<div class="a" style="left:743px;top:90px;width:1px;height:30px;background:#d8d8d8"></div>
<div class="t" style="left:44px;top:100px;font-size:12px;color:#333">799</div>
<div class="t" style="left:87px;top:100px;font-size:12px;color:#333">ONION RINGS</div>
<div class="t" style="left:267px;top:100px;font-size:12px;color:#333"></div>
<div class="t" style="left:449px;top:100px;font-size:12px;color:#111">APPETIZERS</div>
<div class="t" style="left:567px;top:100px;font-size:12px;color:#444">ORINGS</div>
<div class="a" style="left:0px;top:120px;width:917px;height:1px;background:#d8d8d8"></div>
<svg class="a" style="left:7px;top:133px" width="10" height="7"><path d="M1 1.5L5 5.3L9 1.5" stroke="#555" fill="none" stroke-width="1"/></svg>
<div class="t" style="left:30px;top:130px;font-size:12px;color:#333">BREAKFAST - 11 Menu Items</div>
<div class="a" style="left:23px;top:150px;width:894px;height:1px;background:#d8d8d8"></div>
<div class="a" style="left:23px;top:150px;width:1px;height:30px;background:#d8d8d8"></div>
<div class="a" style="left:83px;top:150px;width:1px;height:30px;background:#d8d8d8"></div>
<div class="a" style="left:263px;top:150px;width:1px;height:30px;background:#d8d8d8"></div>
<div class="a" style="left:443px;top:150px;width:1px;height:30px;background:#d8d8d8"></div>
<div class="a" style="left:563px;top:150px;width:1px;height:30px;background:#d8d8d8"></div>
<div class="a" style="left:743px;top:150px;width:1px;height:30px;background:#d8d8d8"></div>
<div class="t" style="left:44px;top:160px;font-size:12px;color:#333">286</div>
<div class="t" style="left:87px;top:160px;font-size:12px;color:#333">BACON &amp; CHEESE OMEL</div>
<div class="t" style="left:267px;top:160px;font-size:12px;color:#333">Bacon &amp;&amp; Fromage Omel</div>
<div class="t" style="left:449px;top:160px;font-size:12px;color:#111">BREAKFAST</div>
<div class="t" style="left:567px;top:160px;font-size:12px;color:#444">BAC+CH OMEL</div>
<div class="a" style="left:23px;top:180px;width:894px;height:1px;background:#d8d8d8"></div>
<div class="a" style="left:23px;top:180px;width:1px;height:30px;background:#d8d8d8"></div>
<div class="a" style="left:83px;top:180px;width:1px;height:30px;background:#d8d8d8"></div>
<div class="a" style="left:263px;top:180px;width:1px;height:30px;background:#d8d8d8"></div>
<div class="a" style="left:443px;top:180px;width:1px;height:30px;background:#d8d8d8"></div>
<div class="a" style="left:563px;top:180px;width:1px;height:30px;background:#d8d8d8"></div>
<div class="a" style="left:743px;top:180px;width:1px;height:30px;background:#d8d8d8"></div>
<div class="t" style="left:44px;top:190px;font-size:12px;color:#333">251</div>
<div class="t" style="left:87px;top:190px;font-size:12px;color:#333">BACON AND EGGS</div>
<div class="t" style="left:267px;top:190px;font-size:12px;color:#333">Bacon et Oeufs</div>
<div class="t" style="left:449px;top:190px;font-size:12px;color:#111">BREAKFAST</div>
<div class="t" style="left:567px;top:190px;font-size:12px;color:#444">EGGS+BAC</div>
<div class="a" style="left:23px;top:210px;width:894px;height:1px;background:#d8d8d8"></div>
<div class="a" style="left:23px;top:210px;width:1px;height:30px;background:#d8d8d8"></div>
<div class="a" style="left:83px;top:210px;width:1px;height:30px;background:#d8d8d8"></div>
<div class="a" style="left:263px;top:210px;width:1px;height:30px;background:#d8d8d8"></div>
<div class="a" style="left:443px;top:210px;width:1px;height:30px;background:#d8d8d8"></div>
<div class="a" style="left:563px;top:210px;width:1px;height:30px;background:#d8d8d8"></div>
<div class="a" style="left:743px;top:210px;width:1px;height:30px;background:#d8d8d8"></div>
<div class="t" style="left:44px;top:220px;font-size:12px;color:#333">257</div>
<div class="t" style="left:87px;top:220px;font-size:12px;color:#333">BLUEBERRY OATMEAL</div>
<div class="t" style="left:267px;top:220px;font-size:12px;color:#333">Flocon d`avoine de la myrtille</div>
<div class="t" style="left:449px;top:220px;font-size:12px;color:#111">BREAKFAST</div>
<div class="t" style="left:567px;top:220px;font-size:12px;color:#444">BB OATMEAL</div>
<div class="a" style="left:23px;top:240px;width:894px;height:1px;background:#d8d8d8"></div>
<div class="a" style="left:23px;top:240px;width:1px;height:30px;background:#d8d8d8"></div>
<div class="a" style="left:83px;top:240px;width:1px;height:30px;background:#d8d8d8"></div>
<div class="a" style="left:263px;top:240px;width:1px;height:30px;background:#d8d8d8"></div>
<div class="a" style="left:443px;top:240px;width:1px;height:30px;background:#d8d8d8"></div>
<div class="a" style="left:563px;top:240px;width:1px;height:30px;background:#d8d8d8"></div>
<div class="a" style="left:743px;top:240px;width:1px;height:30px;background:#d8d8d8"></div>
<div class="t" style="left:44px;top:250px;font-size:12px;color:#333">260</div>
<div class="t" style="left:87px;top:250px;font-size:12px;color:#333">BLUEBERRY PANCAKES</div>
<div class="t" style="left:267px;top:250px;font-size:12px;color:#333">Crêpes fourrées de la myrtille</div>
<div class="t" style="left:449px;top:250px;font-size:12px;color:#111">BREAKFAST</div>
<div class="t" style="left:567px;top:250px;font-size:12px;color:#444">BB PCAKES</div>
<div class="a" style="left:23px;top:270px;width:894px;height:1px;background:#d8d8d8"></div>
</div>
<!-- status -->
<div class="t" style="left:11px;top:722px;font-size:12px;letter-spacing:-0.25px;color:#2b579a;text-decoration:underline;-webkit-text-stroke:0.2px #2b579a">WALDO TRUMBULL</div>

</body></html>
